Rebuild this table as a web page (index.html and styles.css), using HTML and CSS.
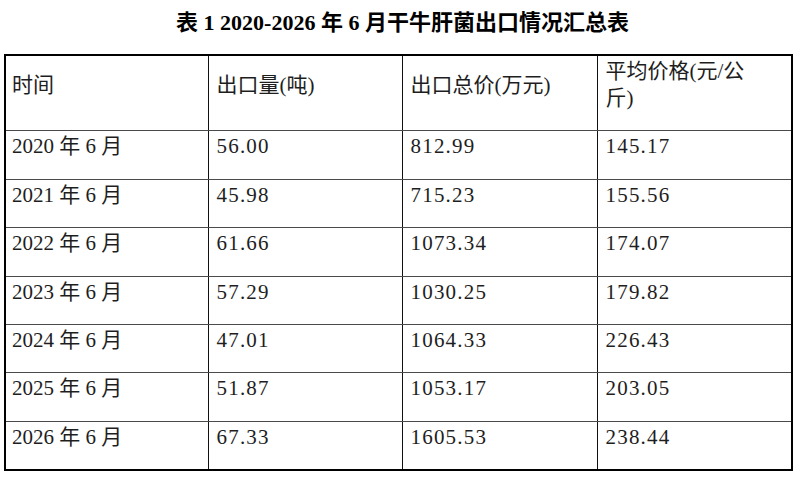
FILE: index.html
```html
<!DOCTYPE html>
<html lang="zh-CN">
<head>
<meta charset="utf-8">
<title>干牛肝菌出口情况汇总表</title>
<link rel="stylesheet" href="styles.css">
</head>
<body>
<div class="page">
  <h1 class="caption">表 1 2020-2026 年 6 月干牛肝菌出口情况汇总表</h1>
  <table class="summary">
    <colgroup>
      <col class="c1">
      <col class="c2">
      <col class="c3">
      <col class="c4">
    </colgroup>
    <thead>
      <tr>
        <th>时间</th>
        <th>出口量(吨)</th>
        <th>出口总价(万元)</th>
        <th>平均价格(元/公<br>斤)</th>
      </tr>
    </thead>
    <tbody>
      <tr><td>2020 年 6 月</td><td>56.00</td><td>812.99</td><td>145.17</td></tr>
      <tr><td>2021 年 6 月</td><td>45.98</td><td>715.23</td><td>155.56</td></tr>
      <tr><td>2022 年 6 月</td><td>61.66</td><td>1073.34</td><td>174.07</td></tr>
      <tr><td>2023 年 6 月</td><td>57.29</td><td>1030.25</td><td>179.82</td></tr>
      <tr><td>2024 年 6 月</td><td>47.01</td><td>1064.33</td><td>226.43</td></tr>
      <tr><td>2025 年 6 月</td><td>51.87</td><td>1053.17</td><td>203.05</td></tr>
      <tr><td>2026 年 6 月</td><td>67.33</td><td>1605.53</td><td>238.44</td></tr>
    </tbody>
  </table>
</div>
</body>
</html>
```

FILE: styles.css
```css
html, body {
  margin: 0;
  padding: 0;
  background: #ffffff;
}

body {
  font-family: "Liberation Serif", "Noto Sans CJK SC", serif;
  color: #1e1e1e;
}

.page {
  width: 800px;
  height: 480px;
  overflow: hidden;
}

.caption {
  margin: 0;
  padding: 8px 0 0 5px;
  height: 54px;
  box-sizing: border-box;
  font-size: 22px;
  line-height: 30px;
  font-weight: bold;
  text-align: center;
  color: #000000;
}

.summary {
  margin: 0 0 0 4px;
  width: 789px;
  table-layout: fixed;
  border-collapse: collapse;
  border: 2px solid #000000;
  font-size: 21px;
  line-height: 27px;
}

.c1 { width: 203px; }
.c2 { width: 194px; }
.c3 { width: 195px; }
.c4 { width: 195px; }

.summary th,
.summary td {
  padding: 2px 6px 18.4px 8px;
  text-align: left;
  vertical-align: middle;
  font-weight: normal;
  white-space: nowrap;
  border-left: 1px solid #111111;
  border-right: 1px solid #111111;
  border-top: 1px solid #4a4a4a;
  border-bottom: 1px solid #4a4a4a;
}

.summary td + td {
  letter-spacing: 1.2px;
}

.summary th:first-child,
.summary td:first-child {
  padding-left: 6px;
}
```
